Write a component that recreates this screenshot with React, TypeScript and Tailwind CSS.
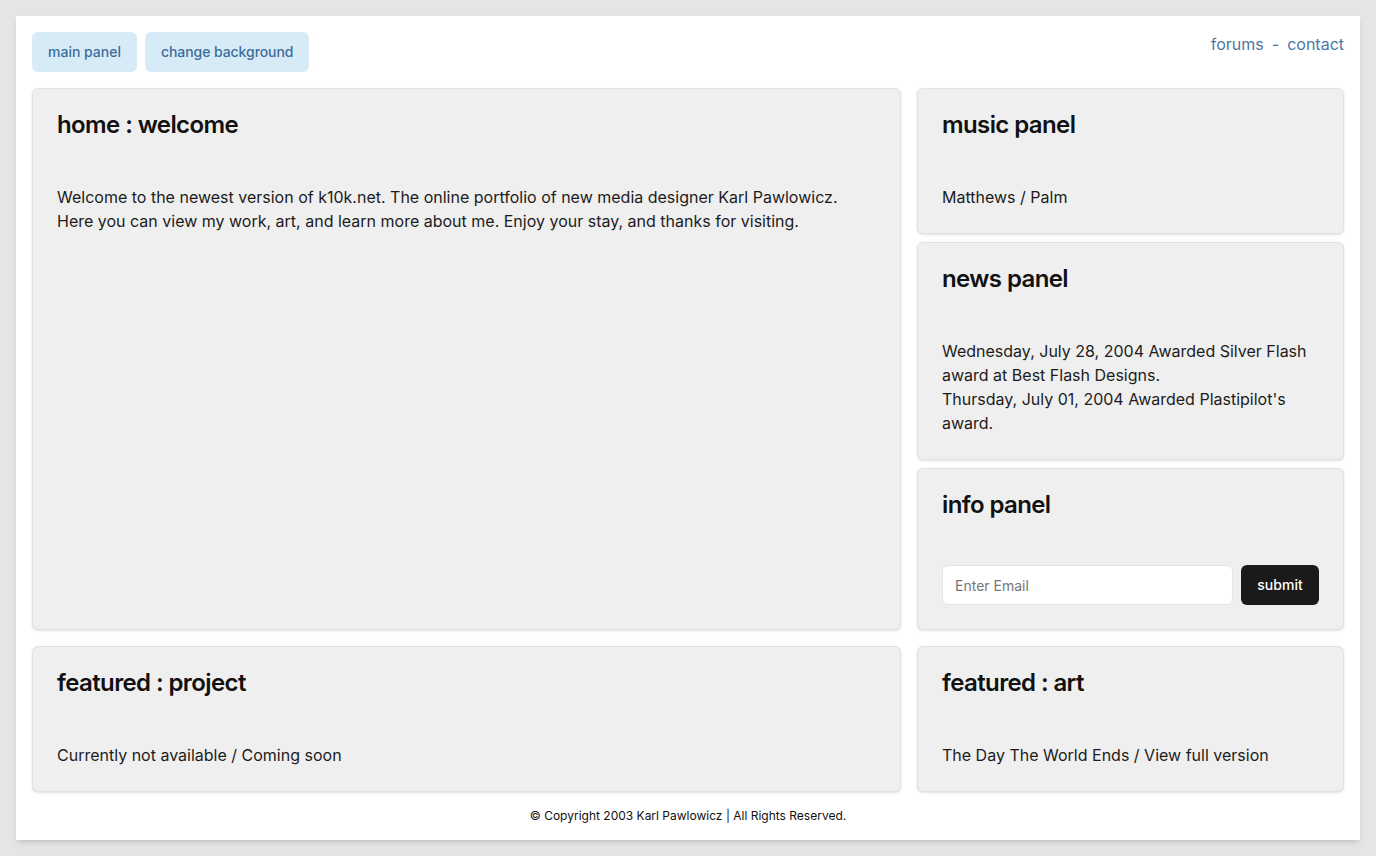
import React from "react";

const Panel = ({ title, children }: { title: string; children: React.ReactNode }) => {
  return (
    <div className="bg-[#efefef] border border-[#e2e2e2] rounded-md shadow-sm p-6">
      <h2 className="text-2xl leading-6 font-semibold text-[#111111] tracking-tight">{title}</h2>
      <div className="mt-12 text-base leading-6 text-[#1c1c1c]">{children}</div>
    </div>
  );
};

export default function App() {
  return (
    <div className="min-h-[856px] bg-[#e5e5e5] p-4 font-['Inter',sans-serif]">
      <div className="bg-white shadow-md p-4">
        <div className="flex items-start justify-between">
          <div className="flex gap-2">
            <button className="h-10 px-4 rounded-md bg-[#d7ebf6] text-sm font-medium text-[#3d6d9b]">
              main panel
            </button>
            <button className="h-10 px-4 rounded-md bg-[#d7ebf6] text-sm font-medium text-[#3d6d9b] tracking-[-0.005em]">
              change background
            </button>
          </div>
          <div className="text-base leading-6 text-[#4a77a4]">
            <a href="#">forums</a>
            <span className="mx-2">-</span>
            <a href="#">contact</a>
          </div>
        </div>

        <div className="mt-4 grid grid-cols-[minmax(0,1fr)_427px] gap-4">
          <Panel title="home : welcome">
            <p>
              Welcome to the newest version of k10k.net. The online portfolio of new media designer Karl Pawlowicz.
              <br />
              Here you can view my work, art, and learn more about me. Enjoy your stay, and thanks for visiting.
            </p>
          </Panel>

          <div className="flex flex-col gap-2">
            <Panel title="music panel">
              <p>Matthews / Palm</p>
            </Panel>
            <Panel title="news panel">
              <p>Wednesday, July 28, 2004 Awarded Silver Flash award at Best Flash Designs.</p>
              <p>Thursday, July 01, 2004 Awarded Plastipilot's award.</p>
            </Panel>
            <Panel title="info panel">
              <form className="flex gap-2" onSubmit={(e) => e.preventDefault()}>
                <input
                  type="email"
                  placeholder="Enter Email"
                  className="h-10 flex-1 min-w-0 rounded-md border border-[#e4e4e4] bg-white px-3 text-sm placeholder:text-[#777777] outline-none"
                />
                <button className="h-10 w-[78px] rounded-md bg-[#1a1a1a] text-sm font-medium text-white">
                  submit
                </button>
              </form>
            </Panel>
          </div>

          <Panel title="featured : project">
            <p>Currently not available / Coming soon</p>
          </Panel>
          <Panel title="featured : art">
            <p>The Day The World Ends / View full version</p>
          </Panel>
        </div>

        <p className="mt-4 text-center text-xs leading-4 text-[#111111]">
          © Copyright 2003 Karl Pawlowicz | All Rights Reserved.
        </p>
      </div>
    </div>
  );
}
